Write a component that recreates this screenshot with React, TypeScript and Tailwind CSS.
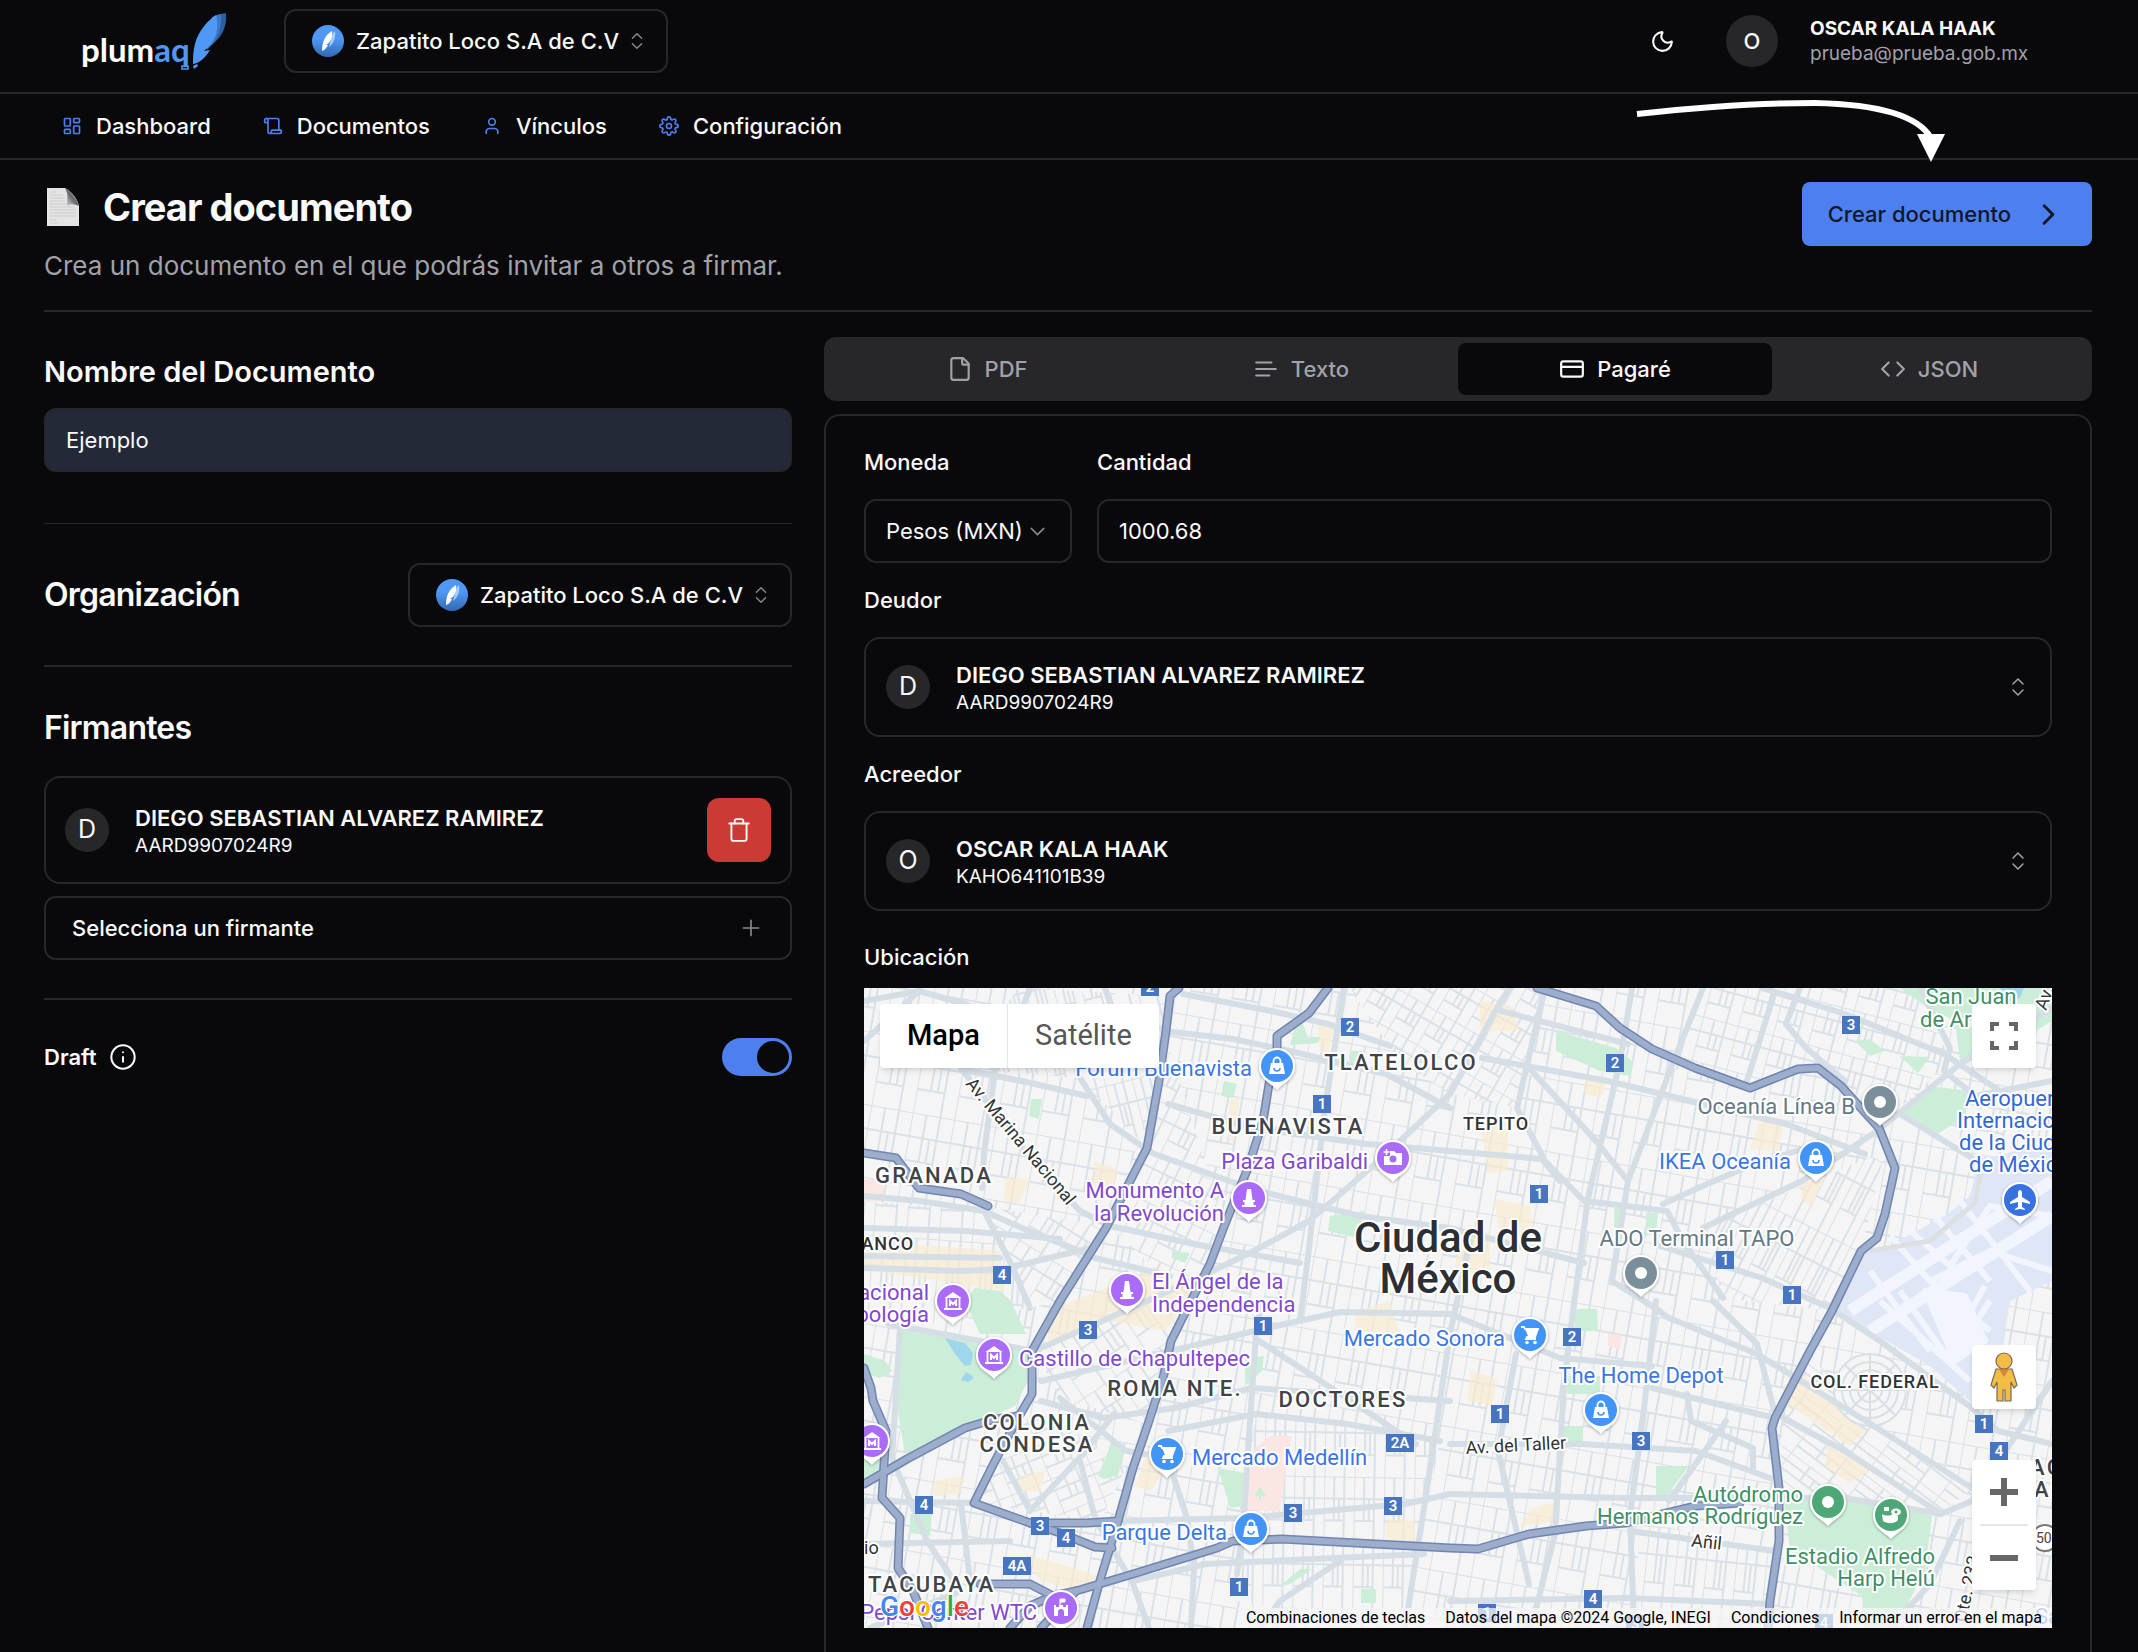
import { useState } from "react";
import type { ComponentProps, ReactNode } from "react";
import {
  ChevronDown,
  ChevronRight,
  ChevronsUpDown,
  Code,
  CreditCard,
  File,
  Info,
  LayoutDashboard,
  Moon,
  Plus,
  Scroll,
  Trash,
  User,
} from "lucide-react";
import { FiSettings } from "react-icons/fi";

const navItems = [
  { label: "Dashboard", icon: LayoutDashboard },
  { label: "Documentos", icon: Scroll },
  { label: "Vínculos", icon: User },
  { label: "Configuración", icon: FiSettings },
];

const tabs = [
  { label: "PDF", icon: File },
  { label: "Texto", icon: TextLines },
  { label: "Pagaré", icon: CreditCard },
  { label: "JSON", icon: Code },
];

function TextLines({ size = 24 }: { size?: number | string }) {
  return (
    <svg width={size} height={size} viewBox="0 0 24 24" fill="none" stroke="currentColor" strokeWidth={2} strokeLinecap="round">
      <path d="M3 6h14M3 12h18M3 18h12" />
    </svg>
  );
}

function Logo() {
  return (
    <svg width="146" height="60" viewBox="82 11 146 60" role="img" aria-label="plumaq">
      <text x="81" y="62" fontFamily="Lato, sans-serif" fontWeight="700" fontSize="33" fill="#fff">
        plum<tspan fill="#4f98f6">aq</tspan>
      </text>
      <path d="M226 13c1 10-2 20-9 27l-6 6 5-31z" fill="#2d5fa0" />
      <path d="M221 14c1 11-2 22-8 29l-6 7 5-33z" fill="#3a78c8" />
      <path d="M216 15c-10 7-18 17-21 29-2 7-2 14-2 20 7-1 13-7 17-14l-6 1c10-7 16-20 12-36z" fill="#4f98f6" />
      <path d="M193 66l4-2 1 2-4 3z" fill="#4f98f6" />
      <path d="M182 66h6v3h-6z" fill="none" stroke="#4f98f6" strokeWidth="1.5" />
    </svg>
  );
}

function OrgAvatar() {
  return (
    <svg className="pointer-events-none absolute left-7 top-4" width="32" height="32" viewBox="0 0 32 32" aria-hidden="true">
      <defs>
        <linearGradient id="org-fill" x1="0" y1="0" x2="0" y2="1">
          <stop offset="0.4" stopColor="#4f98f6" />
          <stop offset="1" stopColor="#3468b4" />
        </linearGradient>
      </defs>
      <circle cx="16" cy="16" r="16" fill="url(#org-fill)" />
      <path d="M23 6c1 6-1 12-6 16l4-14z" fill="#a9cdfa" />
      <path d="M20 6c-7 4-10 11-10 20 3-1 5-4 6-6l-2 0c5-3 7-8 6-14z" fill="#fff" />
    </svg>
  );
}

function OrgSelect({ label }: { label: string }) {
  return (
    <div className="relative">
      <OrgAvatar />
      <select
        aria-label={label}
        className="h-16 w-96 appearance-none rounded-xl border-2 border-[#27272a] bg-transparent pl-[70px] pr-10 text-[22px] font-medium"
      >
        <option>Zapatito Loco S.A de C.V</option>
      </select>
      <ChevronsUpDown size={22} strokeWidth={1.5} className="pointer-events-none absolute right-5 top-[21px] text-[#8b8b8f]" />
    </div>
  );
}

function Initial({ children }: { children: string }) {
  return (
    <span className="flex size-11 shrink-0 items-center justify-center rounded-full bg-[#27272a] text-[25px]">{children}</span>
  );
}

function Person({ name, id }: { name: string; id: string }) {
  return (
    <>
      <Initial>{name[0]}</Initial>
      <span className="flex flex-1 flex-col text-left">
        <span className="text-[22px] font-semibold leading-8">{name}</span>
        <span className="text-[19px] leading-6">{id}</span>
      </span>
    </>
  );
}

function PersonPicker({ label, name, id }: { label: string; name: string; id: string }) {
  return (
    <>
      <h3 id={label} className="mt-[21px] text-[22px] font-medium leading-8">{label}</h3>
      <button
        type="button"
        aria-haspopup="listbox"
        aria-labelledby={label}
        className="mt-[21px] flex h-[100px] w-full items-center gap-[26px] rounded-2xl border-2 border-[#27272a] px-5"
      >
        <Person name={name} id={id} />
        <ChevronsUpDown size={24} strokeWidth={1.5} className="text-[#a1a1aa]" />
      </button>
    </>
  );
}

/* ---------- Map ---------- */

const highways = [
  "1179,987 1170,995 1166,1030 1159,1080 1147,1147 1106,1227 1060,1300 1032,1350 1032,1393 1018,1417 995,1460 974,1502 1030,1522 1060,1532 1095,1546 1112,1547",
  "1030,1522 1087,1522 1118,1520",
  "1328,987 1309,1012 1277,1035 1277,1050 1269,1083 1263,1120 1248,1167 1225,1223 1210,1263 1191,1300 1171,1340 1164,1373 1148,1423 1133,1467 1118,1520 1099,1583 1087,1627",
  "1537,987 1596,1005 1620,1027 1652,1048 1695,1067 1750,1087 1798,1068 1818,1067 1841,1085 1879,1127 1895,1167 1885,1213 1877,1237 1861,1250 1832,1310 1810,1350 1775,1417 1772,1427 1779,1487 1779,1540 1770,1600 1768,1627",
  "1041,1627 1076,1590 1133,1573 1217,1547 1233,1540 1282,1538 1450,1547 1478,1548 1529,1533 1586,1525 1625,1522 1696,1505 1740,1502",
  "864,1367 871,1387 873,1400 886,1430 882,1497 900,1517 898,1567 913,1590 928,1627",
  "864,1483 907,1458 965,1427 995,1418 1018,1415",
  "980,1583 1030,1583 1053,1595 1076,1590",
  "1053,1595 1030,1605 1010,1627",
  "864,1152 896,1157 919,1187 961,1193 988,1205",
];

const avenues = [
  "864,1000 919,990 965,1003 1030,1030",
  "919,990 864,1040",
  "961,1068 1022,1080 1087,1095",
  "1030,987 1010,1040 995,1070 984,1153 982,1187",
  "1105,987 1120,1030",
  "1080,1077 1110,1123 1152,1152 1229,1180 1271,1193 1360,1215 1450,1227 1584,1262",
  "961,1067 1022,1147 1080,1210 1110,1225 1194,1243 1300,1262",
  "864,1195 920,1200 984,1210 1022,1227 1072,1247 1095,1257 1170,1275",
  "984,1210 1011,1263 1030,1307",
  "1206,1273 1248,1253 1309,1220 1382,1157 1450,1093 1501,1000 1510,987",
  "1183,993 1271,1010 1328,1023 1390,1045",
  "1164,1030 1233,1038 1290,1050 1386,1073 1450,1107",
  "1168,1103 1252,1127 1367,1143 1450,1150 1542,1158 1560,1180",
  "1344,987 1325,1107 1309,1247 1300,1320",
  "864,1227 965,1230 1060,1238",
  "864,1255 1000,1257",
  "864,1267 960,1270 1003,1268 1090,1247",
  "1632,987 1620,1060 1588,1197 1573,1310 1564,1383 1555,1533 1538,1600 1530,1627",
  "1703,987 1671,1067 1628,1180 1612,1280 1660,1310",
  "1747,1080 1774,993",
  "1762,987 1845,1013 1944,1053 2000,1090",
  "1800,987 1786,1023 1806,1047 1845,1080",
  "1703,1227 1802,1180 1877,1130 1960,1063 2052,1007",
  "1501,1010 1628,1043",
  "1482,1057 1608,1080 1786,1123 1865,1153",
  "1529,1067 1596,1140 1628,1180",
  "1545,987 1517,1107 1545,1160 1584,1200 1667,1210 1683,1240 1723,1297",
  "1663,1203 1707,1183 1754,1163 1806,1147",
  "1660,1245 1762,1277 1830,1307 1880,1340 1972,1407 1998,1430 2052,1443",
  "1900,1113 1972,1157",
  "1920,987 1950,1047 1944,1070 1975,1095 2052,1080",
  "1625,1287 1669,1317 1757,1353 1845,1407 1972,1487",
  "1783,1417 1845,1450 1941,1513 1972,1500 2052,1380",
  "1656,1300 1643,1417 1630,1513 1634,1627",
  "1450,1443 1582,1443 1696,1450 1770,1477",
  "1450,1493 1625,1497 1766,1497 1845,1497 1941,1513",
  "1652,1387 1775,1417",
  "1687,1393 1691,1420 1753,1447 1753,1467",
  "1450,1600 1625,1597 1770,1603",
  "1516,1353 1498,1450 1529,1583",
  "1450,1313 1560,1357 1652,1365",
  "1713,1300 1757,1343 1775,1413",
  "1630,1530 1775,1550",
  "1726,1420 1669,1500",
  "1960,1520 1930,1583 1890,1627",
  "900,1327 892,1457 927,1540 961,1590",
  "888,1323 1034,1350 1118,1313 1206,1273",
  "1041,1380 1171,1350 1267,1327 1340,1311 1450,1313",
  "1041,1400 1103,1417 1175,1407 1252,1387 1450,1400",
  "1003,1460 1030,1510 1083,1453 1114,1413",
  "1060,1397 1126,1450 1145,1453",
  "1080,1460 1095,1517 1133,1583 1149,1627",
  "1164,1447 1187,1517 1194,1567 1191,1627",
  "1262,1300 1256,1333 1248,1450 1244,1517 1237,1573",
  "1470,1240 1450,1333 1424,1507 1405,1627",
  "1168,1430 1256,1413 1347,1423 1440,1440",
  "1259,1340 1336,1390 1416,1443",
  "1118,1520 1244,1517 1405,1503 1450,1493",
  "1133,1580 1206,1563 1424,1553",
  "1340,1560 1280,1600 1260,1627",
  "864,1500 976,1502",
  "864,1543 1010,1540",
  "961,1590 870,1627",
  "961,1502 970,1580",
];

// Street grids: one rotated line pattern per neighbourhood
const grids = [
  { id: "g0", turn: 10, w: 14, h: 24, area: "864,987 2052,987 2052,1627 864,1627" },
  { id: "g1", turn: 4, w: 11, h: 30, area: "864,1200 982,1210 1030,1307 900,1327 864,1320" },
  { id: "g2", turn: 32, w: 13, h: 17, area: "984,1205 1110,1227 1060,1300 1030,1307" },
  { id: "g3", turn: -34, w: 13, h: 21, area: "1034,1350 1206,1273 1171,1340 1148,1423 1060,1397" },
  { id: "g4", turn: -14, w: 9, h: 22, area: "1018,987 1170,995 1147,1147 1080,1077 961,1067" },
  { id: "g5", turn: 15, w: 12, h: 15, area: "1703,987 1920,987 1950,1060 1879,1127 1818,1067 1750,1087 1671,1067" },
  { id: "g6", turn: 27, w: 9, h: 30, area: "1703,1227 1885,1150 1861,1250 1832,1310 1723,1297" },
  { id: "g7", turn: 37, w: 24, h: 9, area: "1783,1417 1810,1350 1845,1407 1972,1487 1941,1513 1779,1490" },
  { id: "g8", turn: 30, w: 11, h: 13, area: "1350,987 1545,987 1517,1107 1450,1093 1400,1060" },
  { id: "g9", turn: 1, w: 10, h: 22, area: "1256,1413 1440,1440 1405,1627 1237,1600" },
  { id: "g10", turn: 6, w: 10, h: 28, area: "1640,1520 1775,1550 1768,1627 1634,1627" },
  { id: "g11", turn: -22, w: 14, h: 12, area: "974,1502 1018,1417 1060,1420 1126,1467 1100,1520" },
  { id: "g12", turn: 26, w: 12, h: 16, area: "1110,1225 1170,1050 1225,1223 1191,1300" },
];

const parks = [
  "902,1328 965,1337 1026,1350 1028,1380 1015,1405 965,1427 905,1453 896,1400",
  "965,1300 975,1287 1000,1290 1011,1300 1026,1333 980,1333",
  "864,1353 885,1360 892,1370 880,1377 864,1372",
  "864,1430 885,1470 864,1483",
  "1098,1475 1112,1440 1124,1450 1118,1475 1104,1478",
  "1218,1467 1244,1472 1242,1505 1230,1507",
  "910,1513 932,1512 930,1535 910,1532",
  "1224,1080 1237,1083 1233,1097 1221,1095",
  "1031,1098 1042,1098 1039,1118 1029,1115",
  "1330,1215 1364,1210 1358,1237 1328,1230",
  "1296,1022 1302,1020 1308,1037 1320,1036 1318,1042 1290,1044",
  "1350,1050 1362,1050 1362,1065 1350,1062",
  "1556,1030 1616,1047 1632,1060 1630,1075 1600,1070 1556,1050",
  "1900,987 2052,987 2052,1020 1985,1060 1960,1060 1955,1020 1925,1005",
  "1900,1115 1930,1085 1968,1090 1965,1115 1935,1135",
  "1855,1040 1870,1038 1885,1050 1870,1055",
  "1900,1055 1930,1056 1918,1072",
  "1575,1308 1597,1308 1598,1330 1575,1330",
  "1567,1375 1600,1375 1600,1393 1567,1393",
  "1562,1425 1583,1425 1583,1440 1562,1440",
  "1656,1465 1689,1465 1665,1497 1656,1493",
  "1783,1493 1850,1497 1932,1515 1925,1570 1895,1627 1865,1627 1862,1595 1790,1548",
  "1280,1585 1300,1568 1312,1568 1290,1583",
  "1361,1588 1376,1588 1376,1602 1361,1602",
  "1646,1212 1658,1212 1656,1232 1646,1235",
  "1614,1207 1622,1207 1620,1235 1614,1225",
  "1172,1250 1190,1252 1185,1262 1172,1257",
  "1245,1357 1264,1355 1262,1370 1245,1385",
];

const shops = [
  "1480,1122 1508,1120 1508,1170 1488,1172",
  "1494,1198 1530,1205 1535,1240 1500,1235",
  "1586,1075 1608,1080 1600,1097 1584,1092",
  "1760,1120 1783,1125 1778,1150 1750,1148",
  "1480,1000 1510,1005 1520,1030 1480,1030",
  "1318,1020 1335,1024 1328,1055 1320,1050",
  "1095,1160 1120,1170 1108,1195 1092,1185",
  "1006,1175 1030,1180 1018,1202 1004,1200",
  "864,1240 1000,1250 1005,1290 940,1280 864,1268",
  "1048,1310 1150,1270 1195,1290 1165,1330 1110,1320 1048,1345",
  "1230,1100 1240,1095 1234,1140 1228,1140",
  "1458,1235 1490,1230 1490,1275 1455,1270",
  "1355,1310 1390,1300 1400,1335 1355,1330",
  "1470,1370 1498,1378 1492,1405 1468,1400",
  "1783,1385 1800,1370 1865,1430 1850,1445 1783,1400",
  "1828,1440 1870,1470 1850,1482 1825,1465",
  "934,1480 965,1475 960,1493 934,1495",
  "1020,1475 1045,1470 1040,1490 1015,1490",
  "1025,1553 1100,1575 1080,1590 1040,1580",
  "1386,1518 1415,1520 1415,1543 1386,1540",
  "1530,1508 1560,1500 1560,1520 1520,1525",
  "1800,1180 1822,1180 1812,1205 1802,1200",
  "1148,1448 1165,1470 1150,1490 1135,1485",
];

const shields: [string, number, number][] = [
  ["2", 1150, 986], ["2", 1350, 1026], ["1", 1322, 1103], ["4", 1002, 1274], ["3", 1088, 1329],
  ["1", 1263, 1325], ["2", 1615, 1062], ["1", 1539, 1193], ["3", 1851, 1024], ["1", 1725, 1259],
  ["1", 1792, 1294], ["2", 1572, 1336], ["1", 1500, 1413], ["3", 1641, 1440], ["1", 1984, 1423],
  ["4", 1999, 1450], ["4", 924, 1504], ["3", 1040, 1525], ["4", 1066, 1537], ["4A", 1017, 1565],
  ["2A", 1400, 1442], ["3", 1293, 1512], ["3", 1393, 1505], ["1", 1239, 1586], ["4", 1593, 1598],
  ["1", 1487, 1612], ["3", 1635, 1623], ["4", 1824, 1622],
];

type Glyph = "bag" | "camera" | "tower" | "museum" | "cart" | "castle" | "dot" | "plane" | "stadium";

const glyphs: Record<Glyph, ReactNode> = {
  bag: (
    <>
      <path d="M-6-3H6L8 8H-8z" fill="#fff" />
      <path d="M-3.5-3v-2a3.5 3.5 0 0 1 7 0v2" fill="none" stroke="#fff" strokeWidth="1.8" />
      <path d="M-3 2a3 3 0 0 0 6 0" fill="none" stroke="#4294f7" strokeWidth="1.6" />
    </>
  ),
  camera: (
    <>
      <path d="M-9-2h6v-5h4l2 2h6V7H-9z" fill="#fff" />
      <circle cy="1" r="3.5" fill="#a96bf8" />
      <path d="M-6.500-9v6M-9.500-6h6" stroke="#fff" strokeWidth="1.6" />
    </>
  ),
  tower: <path d="M-2-9H2L3.500 2H6V4H4.500V7H7V9H-7V7H-4.500V4H-6V2H-3.500z" fill="#fff" />,
  museum: (
    <>
      <path d="M-8.500-3L0-9 8.500-3zM-9 7H9V9H-9z" fill="#fff" />
      <path d="M-6.500-3V7M6.500-3V7" stroke="#fff" strokeWidth="1.8" />
      <path d="M-3 5V0L0 3 3 0V5" fill="none" stroke="#fff" strokeWidth="2" />
    </>
  ),
  cart: (
    <>
      <path d="M-9-8h3l1 2H8L5 2H-3l-1 2H6" fill="none" stroke="#fff" strokeWidth="1.8" />
      <path d="M-5-6H8L5 1H-2z" fill="#fff" />
      <circle cx="-3" cy="7.500" r="1.800" fill="#fff" />
      <circle cx="5" cy="7.500" r="1.800" fill="#fff" />
    </>
  ),
  castle: (
    <>
      <path d="M-7 8V-3h2V-1h3v-2h4v2h3v-2h2V8H3V4a3 3 0 0 0-6 0V8z" fill="#fff" />
      <path d="M-1-3V-9h5v3H0" fill="#fff" stroke="#fff" strokeWidth="1" />
    </>
  ),
  dot: <circle r="6" fill="#fff" />,
  plane: <path d="M0-10c1.500 0 2 2 2 3v4l8 5v2L2 2v5l3 2v1L0 9l-5 1V9l3-2V2l-8 2V2l8-5v-4c0-1 .5-3 2-3z" fill="#fff" />,
  stadium: (
    <>
      <path d="M-9-1c3 2 8 2 11 0l5 2v4C4 9-4 9-8 6zM-7-8h5v4h-5z" fill="#fff" />
      <ellipse cx="5" cy="-3" rx="5" ry="3.500" fill="#fff" />
      <circle cx="5" cy="-3" r="1.500" fill="#4ea777" />
    </>
  ),
};

const pins: [Glyph, number, number, string][] = [
  ["bag", 1277, 1065, "#4294f7"], ["camera", 1393, 1157, "#a96bf8"], ["tower", 1249, 1197, "#a96bf8"],
  ["tower", 1127, 1289, "#a96bf8"], ["museum", 953, 1300, "#a96bf8"], ["museum", 994, 1354, "#a96bf8"],
  ["museum", 872, 1440, "#a96bf8"], ["cart", 1167, 1453, "#4294f7"], ["bag", 1251, 1528, "#4294f7"],
  ["castle", 1061, 1607, "#a96bf8"], ["cart", 1530, 1334, "#4294f7"], ["bag", 1601, 1409, "#4294f7"],
  ["bag", 1816, 1157, "#4294f7"], ["dot", 1880, 1101, "#7b8f9b"], ["dot", 1641, 1272, "#7b8f9b"],
  ["plane", 2020, 1199, "#3871e0"], ["dot", 1828, 1501, "#4ea777"], ["stadium", 1891, 1514, "#4ea777"],
];

const labelStyles = {
  district: "fill-[#404347] text-[22px] font-medium tracking-widest",
  small: "fill-[#303336] text-[18px] font-medium tracking-wider",
  street: "fill-[#303336] text-[18px]",
  city: "fill-[#2c2f33] text-[42px] font-medium",
  sight: "fill-[#8148d0] text-[22px]",
  shop: "fill-[#3b76e4] text-[22px]",
  airport: "fill-[#3367d6] text-[22px]",
  transit: "fill-[#647985] text-[22px]",
  green: "fill-[#3f8f67] text-[22px]",
};

type Label = [keyof typeof labelStyles, "start" | "middle" | "end", number, number, string, number?];

const labels: Label[] = [
  ["shop", "end", 1252, 1075, "Forum Buenavista"],
  ["district", "middle", 1401, 1069, "TLATELOLCO"],
  ["district", "middle", 1288, 1133, "BUENAVISTA"],
  ["small", "middle", 1496, 1129, "TEPITO"],
  ["sight", "end", 1368, 1168, "Plaza Garibaldi"],
  ["district", "middle", 934, 1182, "GRANADA"],
  ["sight", "end", 1224, 1197, "Monumento A"],
  ["sight", "end", 1224, 1220, "la Revolución"],
  ["city", "middle", 1448, 1251, "Ciudad de"],
  ["city", "middle", 1448, 1292, "México"],
  ["street", "start", 965, 1083, "Av. Marina Nacional", 50],
  ["small", "end", 914, 1249, "POLANCO"],
  ["sight", "end", 929, 1299, "Museo Nacional"],
  ["sight", "end", 929, 1321, "de Antropología"],
  ["sight", "start", 1152, 1288, "El Ángel de la"],
  ["sight", "start", 1152, 1311, "Independencia"],
  ["sight", "start", 1019, 1365, "Castillo de Chapultepec"],
  ["district", "middle", 1175, 1395, "ROMA NTE."],
  ["district", "middle", 1343, 1406, "DOCTORES"],
  ["district", "middle", 1037, 1429, "COLONIA"],
  ["district", "middle", 1037, 1451, "CONDESA"],
  ["shop", "start", 1192, 1464, "Mercado Medellín"],
  ["shop", "end", 1505, 1345, "Mercado Sonora"],
  ["shop", "middle", 1641, 1382, "The Home Depot"],
  ["street", "start", 1466, 1453, "Av. del Taller", -3],
  ["small", "middle", 1875, 1387, "COL. FEDERAL"],
  ["shop", "end", 1227, 1539, "Parque Delta"],
  ["district", "start", 868, 1591, "TACUBAYA"],
  ["sight", "end", 1037, 1619, "Pepsi Center WTC"],
  ["street", "start", 864, 1553, "io"],
  ["green", "end", 1803, 1501, "Autódromo"],
  ["green", "end", 1803, 1523, "Hermanos Rodríguez"],
  ["street", "middle", 1706, 1547, "Añil", 6],
  ["green", "end", 1935, 1563, "Estadio Alfredo"],
  ["green", "end", 1935, 1585, "Harp Helú"],
  ["green", "middle", 1971, 1003, "San Juan"],
  ["green", "start", 1920, 1026, "de Aragón"],
  ["transit", "end", 1855, 1113, "Oceanía Línea B"],
  ["shop", "end", 1791, 1168, "IKEA Oceanía"],
  ["transit", "middle", 1697, 1245, "ADO Terminal TAPO"],
  ["airport", "start", 1965, 1105, "Aeropuerto"],
  ["airport", "start", 1957, 1127, "Internacional"],
  ["airport", "start", 1959, 1149, "de la Ciudad"],
  ["airport", "start", 1969, 1171, "de México"],
  ["district", "start", 2030, 1474, "AGR"],
  ["district", "start", 2034, 1496, "AR"],
  ["street", "start", 1966, 1622, "Ote. 233", -78],
  ["street", "start", 2046, 1010, "Av. 608", -70],
  ["shop", "start", 2035, 1623, "Sa"],
];

function CityMap() {
  return (
    <svg
      className="absolute inset-0 size-full font-[Roboto,sans-serif]"
      viewBox="864 987 1188 640"
      preserveAspectRatio="xMidYMid slice"
      role="img"
      aria-label="Ciudad de México"
    >
      <defs>
        {grids.map((g) => (
          <pattern key={g.id} id={g.id} width={g.w * 3} height={g.h * 3} patternUnits="userSpaceOnUse" patternTransform={`rotate(${g.turn})`}>
            <rect width={g.w * 3} height={g.h * 3} fill="#f5f5f5" />
            <path
              d={`M0 0H${g.w * 3}M0 ${g.h}H${g.w * 3}M0 ${g.h * 2}H${g.w * 2}M0 0V${g.h * 3}M${g.w} 0V${g.h * 2}M${g.w * 2} 0V${g.h * 3}M${g.w * 1.5} ${g.h}V${g.h * 2}`}
              stroke="#dae1e7"
              strokeWidth="2"
              fill="none"
            />
          </pattern>
        ))}
        <filter id="pin-shadow" x="-50%" y="-50%" width="200%" height="200%">
          <feDropShadow dx="0" dy="1" stdDeviation="1.5" floodOpacity="0.35" />
        </filter>
      </defs>

      {grids.map((g) => (
        <polygon key={g.id} points={g.area} fill={`url(#${g.id})`} />
      ))}
      {shops.map((p) => (
        <polygon key={p} points={p} fill="#f8ebd2" opacity="0.7" />
      ))}
      {parks.map((p) => (
        <polygon key={p} points={p} fill="#cceed8" />
      ))}

      {/* Hospitals */}
      <g fill="#fae6e3">
        <polygon points="1252,1450 1270,1435 1292,1435 1286,1467 1280,1510 1247,1510" />
        <polygon points="864,1178 884,1180 882,1200 864,1200" />
        <polygon points="1608,1332 1622,1334 1620,1348 1608,1345" />
      </g>
      <path d="M1260 1495l-6 0 6-9 6 9-5 0v4h-2v-4z" fill="#cceed8" />

      {/* Lakes */}
      <g fill="#9ed6ec">
        <path d="M945 1337l20 5 8 10-2 12-6 1-10-12z" />
        <path d="M966 1371l4 2 4 4-6 4-7-2z" />
        <path d="M2000 987h24l-4 10-12 4z" />
      </g>

      {/* Airport */}
      <polygon points="1885,1247 1945,1215 1970,1195 1978,1160 2052,1140 2052,1280 2010,1300 2000,1360 1972,1402 1930,1365 1835,1310 1861,1250" fill="#dfe6f5" />
      <g fill="none" stroke="#f2f5fe" strokeLinejoin="round">
        <path d="M1850 1310L2052 1180M1870 1330L2052 1215" strokeWidth="12" />
        <path d="M1890 1235l40 45 60-30 62 20M1905 1225l45 40 40-60 62 10M1930 1210l60 70M1960 1200l70 90M1870 1270l60 80M1900 1290l50 70 40-60M1880 1300l90 80M1930 1280l60 50M1945 1355l40-70" strokeWidth="6" />
        <path d="M1925 1290l40 5 20 45-30 20z" fill="#f2f5fe" strokeWidth="6" />
      </g>
      <path d="M1870 1250l60-10 45-38 8-45" fill="none" stroke="#dde0e3" strokeWidth="5" />

      {/* Round neighbourhood with its web of streets */}
      <circle cx="1870" cy="1389" r="36" fill="#f5f5f5" />
      <g fill="none" stroke="#d9dfe5" strokeWidth="2">
        <circle cx="1870" cy="1389" r="36" />
        <circle cx="1870" cy="1389" r="28" />
        <circle cx="1870" cy="1389" r="20" />
        <circle cx="1870" cy="1389" r="12" />
        <path d="M1834 1389h72M1870 1353v72M1845 1364l50 50M1895 1364l-50 50" />
      </g>

      <g fill="none" strokeLinejoin="round" strokeLinecap="round">
        {avenues.map((p) => (
          <polyline key={p} points={p} stroke="#d6dee5" strokeWidth="6" />
        ))}
        {highways.map((p) => (
          <polyline key={p} points={p} stroke="#7085b1" strokeWidth="9" />
        ))}
        {highways.map((p) => (
          <polyline key={p} points={p} stroke="#9dadcc" strokeWidth="6" />
        ))}
      </g>

      {shields.map(([text, x, y]) => (
        <g key={`${x}-${y}`}>
          <rect x={x - (text.length > 1 ? 14 : 9)} y={y - 9} width={text.length > 1 ? 28 : 18} height="18" fill="#4775c2" />
          <text x={x} y={y + 5} textAnchor="middle" className="fill-white text-[15px] font-semibold">{text}</text>
        </g>
      ))}
      <circle cx="2045" cy="1537" r="13" fill="#fff" stroke="#777" strokeWidth="2" />
      <text x="2036" y="1542" className="fill-[#444] text-[14px]">50</text>

      {labels.map(([kind, anchor, x, y, text, turn]) => (
        <text
          key={`${text}-${y}`}
          x={x}
          y={y}
          textAnchor={anchor}
          transform={turn ? `rotate(${turn} ${x} ${y})` : undefined}
          className={labelStyles[kind]}
          stroke="#fff"
          strokeWidth="4"
          strokeLinejoin="round"
          paintOrder="stroke"
        >
          {text}
        </text>
      ))}

      {pins.map(([glyph, x, y, color]) => (
        <g key={`${x}-${y}`} transform={`translate(${x} ${y})`}>
          <path d="M0 24C-4 18-18 14-18 0a18 18 0 0 1 36 0C18 14 4 18 0 24z" fill="#fff" filter="url(#pin-shadow)" />
          <circle r="16" fill={color} />
          {glyphs[glyph]}
        </g>
      ))}

      <text x="880" y="1615" className="text-[28px] font-medium" stroke="#fff" strokeWidth="2" paintOrder="stroke">
        <tspan fill="#4285f4">G</tspan>
        <tspan fill="#ea4335">o</tspan>
        <tspan fill="#fbbc05">o</tspan>
        <tspan fill="#4285f4">g</tspan>
        <tspan fill="#34a853">l</tspan>
        <tspan fill="#ea4335">e</tspan>
      </text>
    </svg>
  );
}

function MapControl({ className, children, ...props }: ComponentProps<"button">) {
  return (
    <button type="button" className={`flex w-16 items-center justify-center bg-white text-[#666] ${className ?? ""}`} {...props}>
      {children}
    </button>
  );
}

function MapPanel() {
  return (
    <div className="relative mt-[15px] h-[640px] overflow-hidden bg-[#f5f5f5] font-[Roboto,sans-serif]">
      <CityMap />

      <div className="absolute left-4 top-4 flex h-16 rounded bg-white text-[29px] shadow-md">
        <button type="button" className="border-r border-[#e6e6e6] px-[27px] font-medium text-black">Mapa</button>
        <button type="button" className="px-[27px] text-[#565656]">Satélite</button>
      </div>

      <MapControl aria-label="Pantalla completa" className="absolute right-4 top-4 h-16 rounded shadow-md">
        <svg width="28" height="28" viewBox="0 0 28 28" fill="none" stroke="currentColor" strokeWidth="4">
          <path d="M2 9V2h7M19 2h7v7M26 19v7h-7M9 26H2v-7" />
        </svg>
      </MapControl>

      <div className="absolute bottom-[38px] right-4 flex flex-col gap-[51px]">
        <MapControl aria-label="Street View" className="h-16 rounded shadow-md">
          <svg width="28" height="50" viewBox="0 0 28 50" fill="#f3bd45" stroke="#77685a" strokeWidth="1.2">
            <path d="M6 17h16l5 16-3 3-3-6v19h-6V38h-2v11H7V30l-3 6-3-3z" />
            <path d="M9 17h10l-5 8z" fill="#d98439" stroke="none" />
            <circle cx="14" cy="9" r="8" />
          </svg>
        </MapControl>
        <div className="flex flex-col rounded bg-white shadow-md">
          <MapControl aria-label="Acercar" className="h-16 rounded-t">
            <svg width="28" height="28" viewBox="0 0 28 28" stroke="currentColor" strokeWidth="6">
              <path d="M0 14h28M14 0v28" />
            </svg>
          </MapControl>
          <hr className="mx-2 border-t-2 border-[#e6e6e6]" />
          <MapControl aria-label="Alejar" className="h-16 rounded-b">
            <svg width="28" height="28" viewBox="0 0 28 28" stroke="currentColor" strokeWidth="6">
              <path d="M0 14h28" />
            </svg>
          </MapControl>
        </div>
      </div>

      <div className="absolute bottom-0 right-0 flex h-5 items-center gap-5 bg-[#f5f5f5]/75 pl-2 pr-[10px] text-[16px] text-black">
        <button type="button">Combinaciones de teclas</button>
        <span>Datos del mapa ©2024 Google, INEGI</span>
        <a href="#condiciones">Condiciones</a>
        <a href="#informar">Informar un error en el mapa</a>
      </div>
    </div>
  );
}

/* ---------- Page ---------- */

export default function App() {
  const [draft, setDraft] = useState(true);
  const [tab, setTab] = useState("Pagaré");

  return (
    <div className="relative min-h-screen bg-[#09090b] font-[Inter,sans-serif] text-[#fafafa]">
      <header className="flex items-center border-b-2 border-[#27272a] pb-[19px] pl-[82px] pr-[104px] pt-[9px]">
        <a href="#inicio" className="mr-14">
          <Logo />
        </a>
        <OrgSelect label="Organización activa" />
        <div className="ml-auto flex items-center">
          <button type="button" aria-label="Cambiar tema" className="mr-[51px]">
            <Moon size={25} />
          </button>
          <span className="mr-8 flex size-[52px] items-center justify-center rounded-full bg-[#27272a] text-[22px] font-medium">O</span>
          <div className="min-w-56">
            <p className="text-[19px] font-bold leading-[25px]">OSCAR KALA HAAK</p>
            <p className="text-[19px] leading-[25px] text-[#a1a1aa]">prueba@prueba.gob.mx</p>
          </div>
        </div>
      </header>

      <nav className="flex gap-[52px] border-b-2 border-[#27272a] px-[62px] py-5 text-[22px] font-medium leading-6">
        {navItems.map(({ label, icon: Icon }) => (
          <a key={label} href={`#${label}`} className="flex items-center gap-[14px]">
            <Icon size={20} className="text-[#4d80ee]" />
            {label}
          </a>
        ))}
      </nav>

      {/* Hint arrow that leads the eye to the main action */}
      <svg className="pointer-events-none absolute right-[192px] top-[96px]" width="310" height="66" viewBox="1636 96 310 66" aria-hidden="true">
        <path d="M1637 114Q1740 103 1815 103Q1912 105 1931 138" fill="none" stroke="#fff" strokeWidth="6" />
        <path d="M1917 134l28 0-14 28z" fill="#fff" />
      </svg>

      <main className="pl-11 pr-[46px] pt-[22px]">
        <div className="flex items-start justify-between border-b-2 border-[#27272a] pb-[26px]">
          <div>
            <h1 className="flex items-center gap-[22px] text-[38px] font-bold leading-[50px] tracking-tight">
              <svg width="37" height="40" viewBox="0 0 37 40" aria-hidden="true">
                <defs>
                  <linearGradient id="page-curl" x1="0" y1="1" x2="1" y2="0">
                    <stop offset="0" stopColor="#eee" />
                    <stop offset="0.5" stopColor="#666" />
                    <stop offset="1" stopColor="#ddd" />
                  </linearGradient>
                </defs>
                <path d="M3 1h18c6 3 12 10 14 18v20H3z" fill="#e4e4e4" />
                <path d="M6 5h6M6 8h13M6 11h14M6 14h15M6 17h16M6 20h25M6 23h26M6 26h26M6 29h26M6 33h6M6 36h8" stroke="#cdcdcd" />
                <path d="M21 1c3 5 3 11 1 19 4-4 8-3 13-1-2-8-8-15-14-18z" fill="url(#page-curl)" />
              </svg>
              Crear documento
            </h1>
            <p className="mt-4 text-[26px] leading-9 text-[#a1a1aa]">Crea un documento en el que podrás invitar a otros a firmar.</p>
          </div>
          <button type="button" className="flex h-16 items-center gap-5 rounded-lg bg-[#4d80ee] px-[26px] text-[22px] font-medium text-[#0f172a]">
            Crear documento
            <ChevronRight size={35} />
          </button>
        </div>

        <div className="mt-[25px] grid grid-cols-[748fr_1268fr] gap-8">
          <section className="pt-[15px]">
            <label htmlFor="nombre" className="block text-[29px] font-semibold leading-10">Nombre del Documento</label>
            <input
              id="nombre"
              defaultValue="Ejemplo"
              className="mt-4 h-16 w-full rounded-xl border-2 border-[#27272a] bg-[#242938] px-5 text-[22px]"
            />

            <div className="mt-[51px] flex items-center justify-between border-b-2 border-t border-[#27272a] pb-[38px] pt-[39px]">
              <h2 className="text-[32px] font-semibold leading-10 tracking-tight">Organización</h2>
              <OrgSelect label="Organización" />
            </div>

            <div className="border-b-2 border-[#27272a] pb-[38px] pt-[39px]">
              <h2 className="text-[32px] font-semibold leading-[44px] tracking-tight">Firmantes</h2>
              <div className="mt-[26px] flex items-center gap-[26px] rounded-2xl border-2 border-[#27272a] px-[19px] py-5">
                <Person name="DIEGO SEBASTIAN ALVAREZ RAMIREZ" id="AARD9907024R9" />
                <button type="button" aria-label="Eliminar firmante" className="flex size-16 items-center justify-center rounded-xl bg-[#cb3a33]">
                  <Trash size={26} strokeWidth={1.75} />
                </button>
              </div>
              <button
                type="button"
                aria-haspopup="listbox"
                className="mt-3 flex h-16 w-full items-center justify-between rounded-xl border-2 border-[#27272a] px-[26px] text-[22px] font-medium"
              >
                Selecciona un firmante
                <Plus size={26} strokeWidth={1.5} className="text-[#8b8b8f]" />
              </button>
            </div>

            <div className="flex items-center pt-[38px]">
              <label htmlFor="draft" className="text-[22px] font-semibold">Draft</label>
              <Info size={28} strokeWidth={1.75} className="ml-3" />
              <span className="relative ml-auto h-[38px] w-[70px]">
                <input
                  id="draft"
                  type="checkbox"
                  role="switch"
                  checked={draft}
                  onChange={() => setDraft(!draft)}
                  className="peer size-full appearance-none rounded-full bg-[#27272a] checked:bg-[#4d80ee]"
                />
                <span className="pointer-events-none absolute left-[3px] top-[3px] size-8 rounded-full bg-[#09090b] peer-checked:left-[35px]" />
              </span>
            </div>
          </section>

          <section>
            <div role="tablist" className="grid h-16 grid-cols-4 rounded-xl bg-[#27272a] p-[6px] text-[22px] font-medium text-[#a1a1aa]">
              {tabs.map(({ label, icon: Icon }) => (
                <button
                  key={label}
                  type="button"
                  role="tab"
                  aria-selected={tab === label}
                  onClick={() => setTab(label)}
                  className="flex items-center justify-center gap-3 rounded-lg aria-selected:bg-[#09090b] aria-selected:text-[#fafafa]"
                >
                  <Icon size={26} />
                  {label}
                </button>
              ))}
            </div>

            <div className="mt-[13px] rounded-t-2xl border-2 border-b-0 border-[#27272a] px-[38px] pb-[25px] pt-[30px]">
              <div className="grid grid-cols-[208px_1fr] gap-x-[25px] gap-y-[21px] text-[22px]">
                <label htmlFor="moneda" className="font-medium leading-8">Moneda</label>
                <label htmlFor="cantidad" className="font-medium leading-8">Cantidad</label>
                <div className="relative">
                  <select id="moneda" className="h-16 w-full appearance-none rounded-xl border-2 border-[#27272a] bg-transparent pl-5">
                    <option>Pesos (MXN)</option>
                  </select>
                  <ChevronDown size={25} strokeWidth={1.5} className="pointer-events-none absolute right-[22px] top-5 text-[#8b8b8f]" />
                </div>
                <input
                  id="cantidad"
                  defaultValue="1000.68"
                  className="h-16 w-full rounded-xl border-2 border-[#27272a] bg-transparent px-5"
                />
              </div>

              <PersonPicker label="Deudor" name="DIEGO SEBASTIAN ALVAREZ RAMIREZ" id="AARD9907024R9" />
              <PersonPicker label="Acreedor" name="OSCAR KALA HAAK" id="KAHO641101B39" />

              <h3 className="mt-[30px] text-[22px] font-medium leading-8">Ubicación</h3>
              <MapPanel />
            </div>
          </section>
        </div>
      </main>
    </div>
  );
}
